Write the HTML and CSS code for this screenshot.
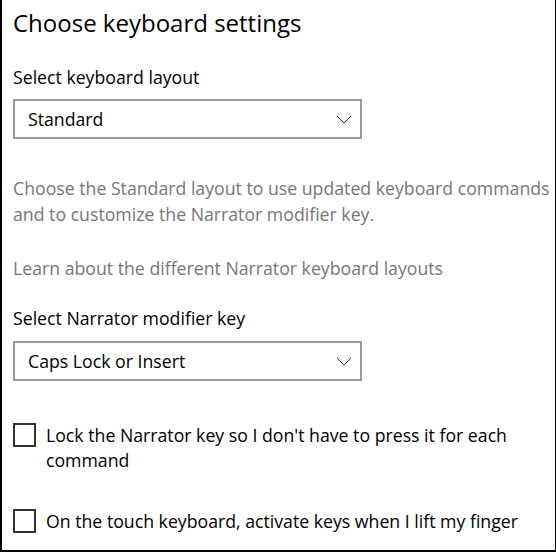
FILE: index.html
```html
<!DOCTYPE html>
<html>
<head>
<meta charset="utf-8">
<link rel="stylesheet" href="styles.css">
</head>
<body>
<div class="page">
  <h1 class="title">Choose keyboard settings</h1>
  <div class="label">Select keyboard layout</div>
  <div class="select">
    <span>Standard</span>
    <svg class="chev" width="16" height="9" viewBox="0 0 16 9"><path d="M1 1 L8 8 L15 1" fill="none" stroke="#333" stroke-width="1"/></svg>
  </div>
  <p class="desc">Choose the Standard layout to use updated keyboard commands<br>and to customize the Narrator modifier key.</p>
  <p class="link">Learn about the different Narrator keyboard layouts</p>
  <div class="label label2">Select Narrator modifier key</div>
  <div class="select select2">
    <span>Caps Lock or Insert</span>
    <svg class="chev" width="16" height="9" viewBox="0 0 16 9"><path d="M1 1 L8 8 L15 1" fill="none" stroke="#333" stroke-width="1"/></svg>
  </div>
  <div class="check check1">
    <span class="box"></span>
    <span class="ctext">Lock the Narrator key so I don't have to press it for each command</span>
  </div>
  <div class="check check2">
    <span class="box"></span>
    <span class="ctext">On the touch keyboard, activate keys when I lift my finger</span>
  </div>
</div>
</body>
</html>
```

FILE: styles.css
```css
html, body {
  margin: 0;
  padding: 0;
  background: #fff;
}
.page {
  box-sizing: border-box;
  width: 556px;
  height: 552px;
  border-left: 2px solid #000;
  border-right: 1px solid #000;
  border-bottom: 2px solid #000;
  padding: 5px 0 0 11px;
  font-family: "Open Sans", "Noto Sans", sans-serif;
  color: #000;
  overflow: hidden;
}
.title {
  margin: 0;
  font-size: 24px;
  font-weight: 400;
  line-height: 36px;
}
.label {
  margin-top: 24px;
  font-size: 17.7px;
  line-height: 24px;
}
.select {
  box-sizing: border-box;
  margin-top: 10px;
  width: 349px;
  height: 40px;
  border: 2px solid #999;
  display: flex;
  align-items: center;
  justify-content: space-between;
  padding: 0 8px 0 13px;
  font-size: 17.7px;
}
.select2 {
  margin-top: 11px;
}
.chev {
  display: block;
}
.desc {
  margin: 36px 0 0 0;
  font-size: 17.7px;
  line-height: 26px;
  color: #767676;
  white-space: nowrap;
}
.link {
  margin: 29px 0 0 0;
  font-size: 17.7px;
  line-height: 24px;
  color: #767676;
}
.label2 {
  margin-top: 26px;
}
.check {
  display: flex;
  align-items: flex-start;
  gap: 10px;
  font-size: 17.7px;
  line-height: 25px;
}
.check1 {
  margin-top: 42px;
}
.check2 {
  margin-top: 36px;
}
.box {
  box-sizing: border-box;
  flex: none;
  width: 23px;
  height: 24px;
  border: 2px solid #333;
}
.ctext {
  width: 495px;
}
```
